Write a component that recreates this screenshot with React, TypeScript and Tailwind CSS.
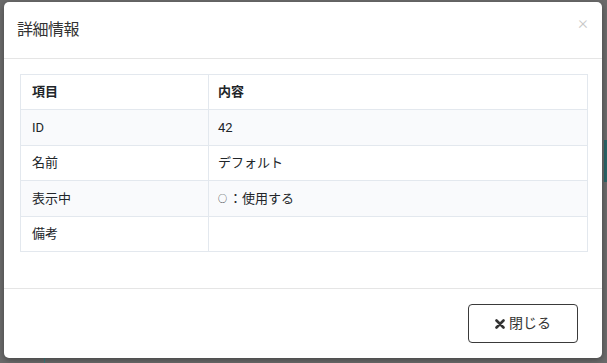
const rows = [
  { label: "ID", value: "42" },
  { label: "名前", value: "デフォルト" },
  { label: "表示中", value: "：使用する", mark: true },
  { label: "備考", value: "" },
];

export default function App() {
  return (
    <div className="relative w-[607px] h-[363px] overflow-hidden bg-[#6b6b6b] font-['Roboto','Noto_Sans_CJK_JP',sans-serif] text-[#212529]">
      {/* background hints behind the backdrop */}
      <div className="absolute right-0 top-[140px] w-[3px] h-[42px] bg-[#2a6466]" />
      <div className="absolute left-[44px] bottom-0 w-px h-[5px] bg-[#3e7e80]" />

      {/* Modal */}
      <div className="absolute left-[4px] top-[2px] w-[598px] h-[356px] bg-white rounded-[5px] flex flex-col shadow-[0_2px_6px_rgba(0,0,0,0.35)]">
        {/* Header */}
        <div className="h-[57px] border-b border-[#e5e5e5] flex items-center justify-between pl-[13px] pr-[14px]">
          <h4 className="text-[16px] text-[#333] tracking-[-0.5px]">詳細情報</h4>
          <button className="text-[#c8c8c8] text-[19px] font-light leading-none -mt-[15px]">×</button>
        </div>

        {/* Body */}
        <div className="flex-1 px-[16px] pt-[15px]">
          <table className="w-[568px] border-collapse text-[13px]">
            <thead>
              <tr className="h-[35px]">
                <th className="w-[188px] border border-[#e3e8ee] text-left font-bold px-[11px]">項目</th>
                <th className="border border-[#e3e8ee] text-left font-bold px-[9px]">内容</th>
              </tr>
            </thead>
            <tbody>
              {rows.map((r, i) => (
                <tr key={r.label} className={i % 2 === 0 ? "h-[36px] bg-[#f9fafc]" : "h-[35px] bg-white"}>
                  <td className="border border-[#e3e8ee] px-[11px]">{r.label}</td>
                  <td className="border border-[#e3e8ee] px-[9px]">
                    {r.mark && <span className="text-[9px] mr-[2px] align-[1px]">○</span>}
                    {r.value}
                  </td>
                </tr>
              ))}
            </tbody>
          </table>
        </div>

        {/* Footer */}
        <div className="h-[70px] border-t border-[#e5e5e5] flex items-center justify-end px-[24px]">
          <button className="w-[110px] h-[39px] border border-[#3a3a3a] rounded-[4px] flex items-center justify-center gap-[4px] text-[14px] text-[#333]">
            <svg width="10" height="10" viewBox="0 0 10 10">
              <path d="M1.5 1.5 L8.5 8.5 M8.5 1.5 L1.5 8.5" stroke="#333" strokeWidth="2.6" strokeLinecap="round" />
            </svg>
            閉じる
          </button>
        </div>
      </div>
    </div>
  );
}
